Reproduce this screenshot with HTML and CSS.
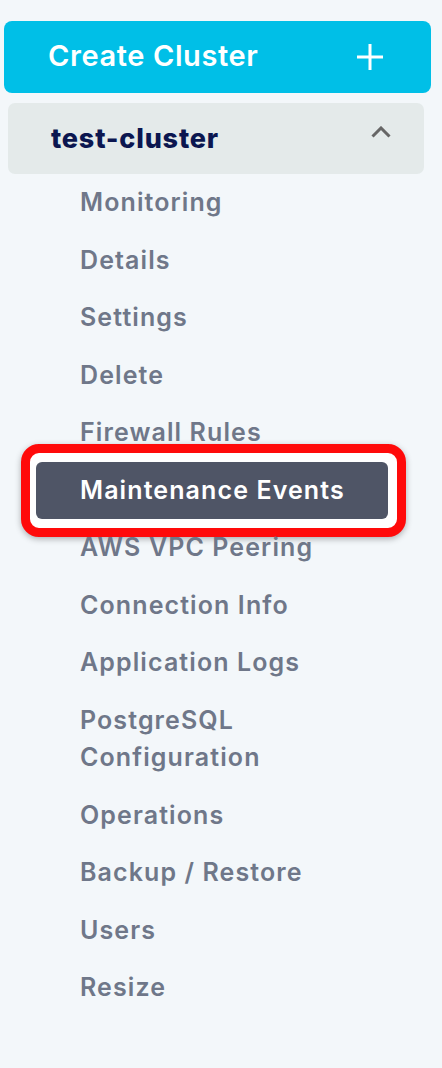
FILE: index.html
```html
<!DOCTYPE html>
<html lang="en">
<head>
    <meta charset="UTF-8">
    <meta name="viewport" content="width=device-width, initial-scale=1.0">
    <title>Clusters</title>
    <link rel="stylesheet" href="styles.css">
</head>
<body>
    <nav class="sidebar">
        <button class="create-button">
            <span>Create Cluster</span>
            <svg class="plus" width="26" height="26" viewBox="0 0 26 26">
                <path d="M13 0v26M0 13h26" stroke="#fff" stroke-width="3" fill="none"/>
            </svg>
        </button>
        <div class="cluster-header">
            <span>test-cluster</span>
            <svg class="chevron" width="20" height="12" viewBox="0 0 20 12">
                <path d="M1.5 10.5l8.5-8.5 8.5 8.5" stroke="#666" stroke-width="3" fill="none"/>
            </svg>
        </div>
        <ul class="menu">
            <li class="menu-item">Monitoring</li>
            <li class="menu-item">Details</li>
            <li class="menu-item">Settings</li>
            <li class="menu-item">Delete</li>
            <li class="menu-item">Firewall Rules</li>
            <li class="menu-item active">Maintenance Events</li>
            <li class="menu-item">AWS VPC Peering</li>
            <li class="menu-item">Connection Info</li>
            <li class="menu-item">Application Logs</li>
            <li class="menu-item">PostgreSQL Configuration</li>
            <li class="menu-item">Operations</li>
            <li class="menu-item">Backup / Restore</li>
            <li class="menu-item">Users</li>
            <li class="menu-item">Resize</li>
        </ul>
    </nav>
</body>
</html>
```

FILE: styles.css
```css
body {
    margin: 0;
    padding: 0;
    background-color: #f3f7fa;
    font-family: Inter, "Open Sans", sans-serif;
}
.sidebar {
    width: 442px;
    padding-top: 21px;
}
.create-button {
    display: flex;
    align-items: center;
    justify-content: space-between;
    box-sizing: border-box;
    width: 427px;
    height: 72px;
    margin-left: 4px;
    padding: 0 48px 3px 44px;
    background-color: #00bfe7;
    color: white;
    border: none;
    border-radius: 8px;
    font-family: inherit;
    font-size: 29px;
    font-weight: 600;
    letter-spacing: 0.6px;
}
.create-button .plus {
    display: block;
    margin-top: 3px;
}
.cluster-header {
    display: flex;
    align-items: center;
    justify-content: space-between;
    box-sizing: border-box;
    width: 416px;
    height: 71px;
    margin: 10px 0 0 8px;
    padding: 0 33px 0 43px;
    background-color: #e4eaea;
    border-radius: 7px;
    color: #0b1650;
    font-size: 27px;
    font-weight: 800;
    letter-spacing: 0.8px;
}
.cluster-header .chevron {
    display: block;
    margin-bottom: 13px;
}
.menu {
    list-style: none;
    margin: 0;
    padding: 0;
}
.menu-item {
    box-sizing: border-box;
    width: 352px;
    margin-left: 36px;
    padding: 10px 40px 10px 44px;
    line-height: 37.5px;
    font-size: 25px;
    font-weight: 600;
    letter-spacing: 1.1px;
    color: #6f7789;
}
.menu-item.active {
    position: relative;
    background-color: #4f5566;
    color: white;
    border-radius: 6px;
}
/* red highlight ring drawn behind the active item */
.menu-item.active::before {
    content: "";
    position: absolute;
    left: -15px;
    top: -18px;
    right: -18px;
    bottom: -18px;
    border: 9px solid #ff0a0a;
    border-radius: 18px;
    box-shadow: 0 2px 6px rgba(0,0,0,0.3);
    background: white;
    z-index: -1;
}
```
